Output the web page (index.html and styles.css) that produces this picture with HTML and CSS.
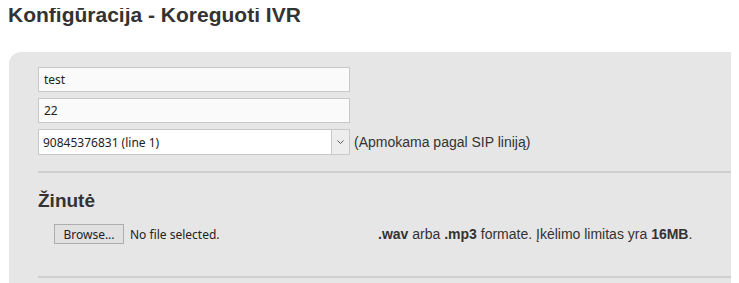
FILE: index.html
```html
<!DOCTYPE html>
<html lang="lt">
<head>
    <meta charset="UTF-8">
    <meta name="viewport" content="width=device-width, initial-scale=1.0">
    <title>Konfigūracija - Koreguoti IVR</title>
    <link rel="stylesheet" href="styles.css">
</head>
<body>
    <h1>Konfigūracija - Koreguoti IVR</h1>

    <div class="panel">
        <div class="field">
            <input type="text" class="text-input" value="test">
        </div>
        <div class="field">
            <input type="text" class="text-input" value="22">
        </div>
        <div class="field">
            <div class="select-wrap">
                <select class="select-input">
                    <option>90845376831 (line 1)</option>
                </select>
                <span class="select-arrow">
                    <svg width="7" height="4" viewBox="0 0 7 4"><path d="M0.5 0.5 L3.5 3.5 L6.5 0.5" fill="none" stroke="#555" stroke-width="1"/></svg>
                </span>
            </div>
            <span class="hint">(Apmokama pagal SIP liniją)</span>
        </div>

        <hr class="sep">

        <h2>Žinutė</h2>
        <div class="upload-row">
            <div class="file-box">
                <button class="browse">Browse...</button>
                <span class="file-name">No file selected.</span>
            </div>
            <div class="upload-info">
                <b>.wav</b> arba <b>.mp3</b> formate. Įkėlimo limitas yra <b>16MB</b>.
            </div>
        </div>

        <hr class="sep">
    </div>
</body>
</html>
```

FILE: styles.css
```css
body {
    margin: 8px;
    font-family: "Liberation Sans", Arial, sans-serif;
    color: #333;
    background: #fff;
    overflow: hidden;
}
h1 {
    font-size: 21px;
    font-weight: bold;
    margin: -4px 0 0 0;
    line-height: 22px;
}
.panel {
    background: #e6e6e6;
    border-radius: 12px 0 0 0;
    margin: 26px -8px 0 1px;
    padding: 15px 0 10px 29px;
}
.field {
    display: flex;
    align-items: center;
    margin-bottom: 6px;
}
.text-input {
    width: 312px;
    height: 25px;
    box-sizing: border-box;
    border: 1px solid #c8c8c8;
    background: #fafafa;
    padding: 0 5px;
    font-family: "Noto Sans", sans-serif;
    font-size: 12px;
    color: #222;
    outline: none;
}
.select-wrap {
    position: relative;
    width: 312px;
    height: 26px;
}
.select-input {
    width: 100%;
    height: 100%;
    box-sizing: border-box;
    border: 1px solid #c8c8c8;
    background: #fff;
    padding: 0 4px;
    font-family: "Noto Sans", sans-serif;
    font-size: 12px;
    color: #222;
    appearance: none;
    -webkit-appearance: none;
    border-radius: 0;
    outline: none;
}
.select-arrow {
    position: absolute;
    top: 1px;
    right: 1px;
    width: 17px;
    height: 24px;
    border-left: 1px solid #c8c8c8;
    background: #ededed;
    display: flex;
    align-items: center;
    justify-content: center;
}
.hint {
    font-size: 14px;
    margin-left: 4px;
}
.sep {
    border: none;
    border-top: 2px solid #cfcfcf;
    margin: 16px 0 0 0;
}
h2 {
    font-size: 19px;
    font-weight: bold;
    margin: 17px 0 0 0;
    line-height: 22px;
}
.upload-row {
    display: flex;
    align-items: center;
    margin-top: 12px;
}
.file-box {
    width: 324px;
    padding-left: 16px;
    display: flex;
    align-items: center;
}
.browse {
    font-family: "Noto Sans", sans-serif;
    font-size: 12px;
    color: #222;
    background: #e1e1e1;
    border: 1px solid #adadad;
    height: 20px;
    width: 70px;
    padding: 0;
    border-radius: 0;
}
.file-name {
    font-family: "Noto Sans", sans-serif;
    font-size: 12px;
    color: #222;
    margin-left: 6px;
}
.upload-info {
    font-size: 14px;
}
.upload-info b {
    color: #333;
}
.upload-row + .sep {
    margin-top: 32px;
}
```
